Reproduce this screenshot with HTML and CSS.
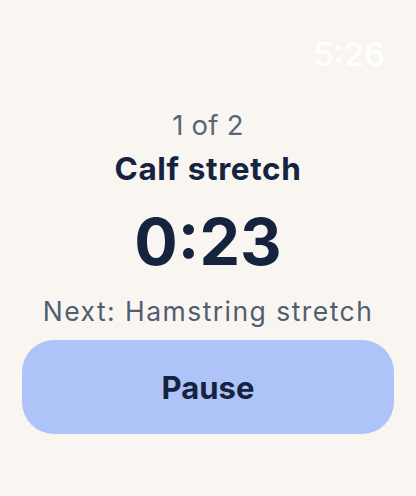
FILE: index.html
```html
<!doctype html>
<html><head>
	<title>Stretch timer</title>
	<meta charset="utf-8">
	<link rel="stylesheet" href="styles.css">
</head><body>
	<div class="status">
		<span class="clock">5:26</span>
	</div>
	<main class="timer">
		<p class="count">1 of 2</p>
		<h1 class="name">Calf stretch</h1>
		<p class="remaining">0:23</p>
		<p class="next">Next: Hamstring stretch</p>
		<button type="button" class="pause">Pause</button>
	</main>
</body></html>
```

FILE: styles.css
```css
body {
	margin: 0;
	background: #f9f6f2;
	font-family: Inter, 'Noto Sans', sans-serif;
	color: #15233f;
}

p, h1 {
	margin: 0;
}

.status {
	display: flex;
	justify-content: flex-end;
	padding: 34px 31px 0 0;
}

.clock {
	color: #fff;
	font-size: 33px;
	font-weight: 500;
	line-height: 40px;
}

.timer {
	display: flex;
	flex-direction: column;
	align-items: center;
	padding: 35px 22px 0 22px;
}

.count {
	color: #5a6578;
	font-size: 27.5px;
	line-height: 32px;
	letter-spacing: 0.01em;
}

.name {
	margin-top: 9px;
	font-size: 31.5px;
	font-weight: 700;
	line-height: 38px;
	letter-spacing: 0.02em;
}

.remaining {
	margin-top: 18px;
	font-size: 64.5px;
	font-weight: 700;
	line-height: 72px;
}

.next {
	margin-top: 17px;
	color: #525d70;
	font-size: 26.5px;
	line-height: 32px;
	letter-spacing: 0.055em;
}

.pause {
	align-self: stretch;
	height: 94px;
	margin-top: 13px;
	border: 0;
	border-radius: 32px;
	background: #aec4f9;
	color: #15233f;
	font: 700 31px Inter, 'Noto Sans', sans-serif;
}
```
